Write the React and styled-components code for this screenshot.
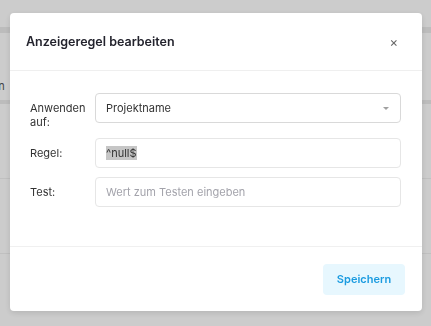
import React from "react";
import styled, { createGlobalStyle } from "styled-components";

const GlobalStyle = createGlobalStyle`
  html, body {
    margin: 0;
    padding: 0;
    background: #ffffff;
    font-family: Inter, "Noto Sans", sans-serif;
  }
`;

const App = () => {
  return (
    <>
      <GlobalStyle />
      <Page>
        <PageBar />
        <PageRow $thick>
          <PageText>Ein</PageText>
        </PageRow>
        <PageRow />
        <PageRow />
        <PageRow />
      </Page>
      <Backdrop>
        <Modal>
          <Header>
            <Title>Anzeigeregel bearbeiten</Title>
            <Close>×</Close>
          </Header>
          <Body>
            <Row>
              <Label>Anwenden auf:</Label>
              <Select>
                <span>Projektname</span>
                <Caret />
              </Select>
            </Row>
            <Row>
              <Label>Regel:</Label>
              <Field>
                <Selected>^null$</Selected>
              </Field>
            </Row>
            <Row>
              <Label>Test:</Label>
              <Field $placeholder>Wert zum Testen eingeben</Field>
            </Row>
          </Body>
          <Footer>
            <SaveButton>Speichern</SaveButton>
          </Footer>
        </Modal>
      </Backdrop>
    </>
  );
};

export default App;

const Page = styled.div`
  width: 431px;
  height: 326px;
  background: #ffffff;
  overflow: hidden;
`;

const PageBar = styled.div`
  height: 27px;
  border-bottom: 6px solid #ececec;
`;

const PageRow = styled.div`
  height: ${(p) => (p.$thick ? "71px" : "75px")};
  border-bottom: ${(p) => (p.$thick ? "4px solid #ececec" : "1px solid #f0f0f0")};
  display: flex;
  align-items: center;
  padding-top: ${(p) => (p.$thick ? "38px" : "0")};
  box-sizing: border-box;
`;

const PageText = styled.span`
  font-size: 11px;
  color: #555;
  margin-left: -11px;
`;

const Backdrop = styled.div`
  position: fixed;
  inset: 0;
  background: rgba(0, 0, 0, 0.2);
  padding: 13px 9px 0 10px;
`;

const Modal = styled.div`
  width: 412px;
  background: #ffffff;
  border-radius: 4px;
  box-shadow: 0 2px 6px rgba(0, 0, 0, 0.12);
`;

const Header = styled.div`
  height: 57px;
  display: flex;
  align-items: center;
  justify-content: space-between;
  padding: 0 24px 0 16px;
  border-bottom: 1px solid #efefef;
`;

const Title = styled.div`
  font-size: 12.5px;
  font-weight: 600;
  color: #23232d;
`;

const Close = styled.div`
  font-size: 13px;
  color: #666;
`;

const Body = styled.div`
  padding: 22px 21px 39px 20px;
  display: flex;
  flex-direction: column;
  gap: 9px;
  border-bottom: 1px solid #f0f0f0;
`;

const Row = styled.div`
  display: flex;
  align-items: flex-start;
`;

const Label = styled.div`
  width: 65px;
  flex-shrink: 0;
  font-size: 11px;
  line-height: 14px;
  color: #333;
  padding-top: 8px;
`;

const Field = styled.div`
  flex: 1;
  height: 30px;
  box-sizing: border-box;
  border: 1px solid #e6e6e6;
  border-radius: 4px;
  display: flex;
  align-items: center;
  padding: 0 10px;
  font-size: 11px;
  color: ${(p) => (p.$placeholder ? "#a3a3ab" : "#333")};
`;

const Select = styled(Field)`
  border-color: #d9d9d9;
  justify-content: space-between;
  padding-right: 11px;
  color: #333;
`;

const Caret = styled.span`
  width: 0;
  height: 0;
  border-left: 3.5px solid transparent;
  border-right: 3.5px solid transparent;
  border-top: 3.5px solid #a0a0a0;
`;

const Selected = styled.span`
  background: #c6c6c6;
  color: #333;
`;

const Footer = styled.div`
  height: 64px;
  display: flex;
  align-items: center;
  justify-content: flex-end;
  padding: 0 17px;
`;

const SaveButton = styled.button`
  height: 31px;
  width: 82px;
  border: none;
  border-radius: 4px;
  background: #e7f7fe;
  color: #1a9be0;
  font-family: inherit;
  font-size: 11px;
  font-weight: 600;
`;
